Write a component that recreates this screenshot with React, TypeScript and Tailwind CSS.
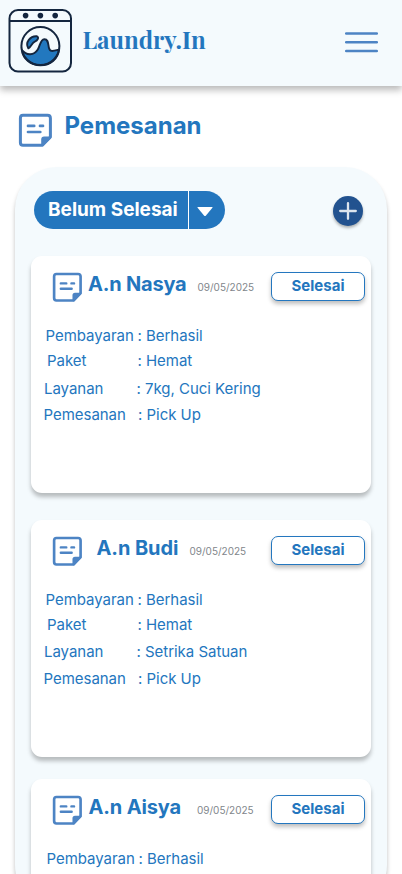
type Row = { label: string; value: string; row: string; labelWidth: string };
type Order = {
  name: string;
  date: string;
  card: string;
  nameBox: string;
  rows: Row[];
};

const orders: Order[] = [
  {
    name: "A.n Nasya",
    date: "09/05/2025",
    card: "mt-[27px]",
    nameBox: "ml-[6px] w-[109.5px] tracking-[-0.2px]",
    rows: [
      { label: "Pembayaran", value: ": Berhasil", row: "mt-[24px] pl-[14.5px]", labelWidth: "w-[92px]" },
      { label: "Paket", value: ": Hemat", row: "mt-[5px] pl-[16px]", labelWidth: "w-[90.5px]" },
      { label: "Layanan", value: ": 7kg, Cuci Kering", row: "mt-[8px] pl-[13px]", labelWidth: "w-[92.5px]" },
      { label: "Pemesanan", value: ": Pick Up", row: "mt-[6px] pl-[12.5px]", labelWidth: "w-[94.5px]" },
    ],
  },
  {
    name: "A.n Budi",
    date: "09/05/2025",
    card: "mt-[27px]",
    nameBox: "ml-[14.5px] w-[93px] tracking-[-0.1px]",
    rows: [
      { label: "Pembayaran", value: ": Berhasil", row: "mt-[24px] pl-[14.5px]", labelWidth: "w-[92px]" },
      { label: "Paket", value: ": Hemat", row: "mt-[5px] pl-[16px]", labelWidth: "w-[90.5px]" },
      { label: "Layanan", value: ": Setrika Satuan", row: "mt-[7px] pl-[13px]", labelWidth: "w-[92.5px]" },
      { label: "Pemesanan", value: ": Pick Up", row: "mt-[7px] pl-[12.5px]", labelWidth: "w-[94.5px]" },
    ],
  },
  {
    name: "A.n Aisya",
    date: "09/05/2025",
    card: "mt-[22px]",
    nameBox: "ml-[6.5px] w-[108.5px] tracking-[-0.15px]",
    rows: [
      { label: "Pembayaran", value: ": Berhasil", row: "mt-[24px] pl-[15.5px]", labelWidth: "w-[92px]" },
    ],
  },
];

function NoteIcon({ className }: { className: string }) {
  return (
    <svg viewBox="0 0 34 34" className={className} fill="none" stroke="#4d84c4" strokeWidth="3" strokeLinecap="round" strokeLinejoin="round">
      <path d="M5 2.3H29.5Q32.4 2.3 32.4 5.2V24L24.4 32.3H5Q2.4 32.3 2.4 29.5V5.2Q2.4 2.3 5 2.3Z" />
      <path d="M24.4 32V26.3Q24.4 24.6 26.1 24.6H32Z" fill="#4d84c4" strokeWidth="2.4" />
      <path d="M10 12.9H16.2M22 12.9H25M10 19H22.3" strokeWidth="2.7" />
    </svg>
  );
}

function WasherLogo() {
  return (
    <svg viewBox="0 0 64 64" className="h-16 w-16" fill="none" stroke="#14263f" strokeWidth="2">
      <rect x="1.5" y="1" width="61.5" height="61.5" rx="8.5" />
      <path d="M1.5 12H63" />
      <g fill="#14263f" stroke="none">
        <circle cx="17.6" cy="6.6" r="2.8" />
        <circle cx="32.4" cy="6.6" r="2.8" />
        <circle cx="47.2" cy="6.6" r="2.8" />
      </g>
      <path d="M14 41.2C18.5 46.8 26 46.6 29.8 40.5C32.3 36.5 32.2 30.4 36.3 30.2C40.4 30.1 40 34.8 40.9 38.8C41.9 43.2 44.6 42.2 51 40.6C50.1 50 42.3 56.3 32.4 56.3C22.7 56.3 14.9 50 14 41.2Z" fill="#2278bf" strokeWidth="1.9" />
      <circle cx="32.4" cy="37.1" r="19" />
      <path d="M20.3 39.3C16.8 33.5 22.4 26.8 28.6 27.2C31.6 28.2 29.6 31.6 26.8 32.6C23.6 33.9 23.8 37.4 20.3 39.3Z" fill="#2278bf" strokeWidth="1.9" strokeLinejoin="round" />
    </svg>
  );
}

function OrderCard({ order }: { order: Order }) {
  return (
    <article className={`${order.card} h-[237px] w-[340px] shrink-0 rounded-[11px] bg-white pt-4 shadow-[0_4px_4px_rgba(0,0,0,0.25)]`}>
      <div className="flex h-[30px] items-start pl-[21px] pr-[6px]">
        <NoteIcon className="h-[30px] w-[30px] shrink-0" />
        <h2 className={`${order.nameBox} shrink-0 whitespace-nowrap text-[20px] font-bold leading-6`}>{order.name}</h2>
        <time className="pt-[9px] text-[10px] leading-3 text-[#81868b]">{order.date}</time>
        <button className="ml-auto h-[29px] w-[94px] rounded-[7px] border-[1.5px] border-[#2477bf] bg-white pb-0.5 text-[15px] font-bold leading-6 shadow-[0_3px_4px_rgba(0,0,0,0.25)]">
          Selesai
        </button>
      </div>
      {order.rows.map((r) => (
        <div key={r.label} className={`${r.row} flex text-[15px] leading-5 tracking-[-0.03px] whitespace-nowrap`}>
          <span className={`${r.labelWidth} shrink-0`}>{r.label}</span>
          <span>{r.value}</span>
        </div>
      ))}
    </article>
  );
}

export default function App() {
  return (
    <div className="flex h-[874px] w-[402px] flex-col overflow-hidden bg-white font-['Inter',sans-serif] text-[#2376be]">
      <header className="flex h-[86px] shrink-0 items-start bg-[#f4fafd] pl-2 pr-6 pt-[9px] shadow-[0_4px_7px_rgba(0,0,0,0.28)]">
        <WasherLogo />
        <span className="ml-[10.5px] mt-[14px] font-['Playfair_Display','Liberation_Serif',serif] text-[24px] font-bold leading-8 tracking-[-0.05px]">Laundry.In</span>
        <button aria-label="Menu" className="ml-auto mt-[22.5px] flex w-[33px]">
          <svg viewBox="0 0 33 21" className="h-[21px] w-[33px]" stroke="#4d84c4" strokeWidth="2.5" strokeLinecap="round">
            <path d="M1.2 1.5H31.8M1.2 10.3H31.8M1.2 19.1H31.8" />
          </svg>
        </button>
      </header>

      <div className="flex h-[81px] shrink-0 items-start pl-[18px] pt-[27px]">
        <NoteIcon className="h-[34px] w-[34px]" />
        <h1 className="ml-[12.5px] -mt-[3px] text-[24px] font-bold leading-8">Pemesanan</h1>
      </div>

      <main className="mx-[15px] flex h-[740px] shrink-0 flex-col rounded-[42px] bg-[#f4fafd] px-4 pt-6 shadow-[0_4px_4px_rgba(0,0,0,0.25)]">
        <div className="flex h-[38px] shrink-0 items-center justify-between pl-[3px] pr-2">
          <button className="flex h-[38px] w-[191px] overflow-hidden rounded-full bg-[#2376be] text-white">
            <span className="w-[154px] whitespace-nowrap pl-[14px] text-left text-[19px] font-bold leading-[37px]">Belum Selesai</span>
            <span className="flex h-full flex-1 items-center border-l border-white pl-2 pt-[3px]">
              <svg viewBox="0 0 16 9" className="h-[9px] w-4" fill="currentColor">
                <path d="M1 0H15Q16 0 15.4 .8L9 8.4Q8 9.4 7 8.4L.6 .8Q0 0 1 0Z" />
              </svg>
            </span>
          </button>
          <button aria-label="Tambah" className="mt-px flex h-[30px] w-[30px] items-center justify-center rounded-full bg-[#22528f] shadow-[0_2px_3px_rgba(0,0,0,0.3)]">
            <svg viewBox="0 0 18 18" className="h-[18px] w-[18px]" stroke="#dce4ed" strokeWidth="2.3" strokeLinecap="round">
              <path d="M9 1.2V16.8M1.2 9H16.8" />
            </svg>
          </button>
        </div>
        {orders.map((order) => (
          <OrderCard key={order.name} order={order} />
        ))}
      </main>
    </div>
  );
}
